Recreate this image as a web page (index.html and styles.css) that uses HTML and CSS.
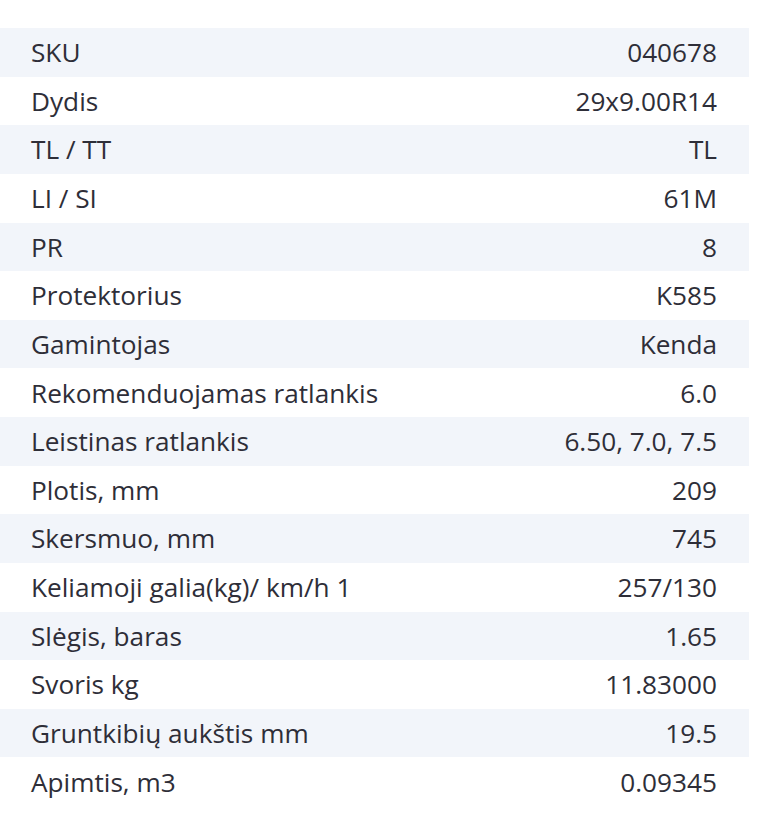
FILE: index.html
```html
<!DOCTYPE html>
<html lang="lt">
<head>
<meta charset="utf-8">
<link rel="stylesheet" href="styles.css">
</head>
<body>
<div class="specs">
  <div class="row"><span class="k">SKU</span><span class="v">040678</span></div>
  <div class="row"><span class="k">Dydis</span><span class="v">29x9.00R14</span></div>
  <div class="row"><span class="k">TL / TT</span><span class="v">TL</span></div>
  <div class="row"><span class="k">LI / SI</span><span class="v">61M</span></div>
  <div class="row"><span class="k">PR</span><span class="v">8</span></div>
  <div class="row"><span class="k">Protektorius</span><span class="v">K585</span></div>
  <div class="row"><span class="k">Gamintojas</span><span class="v">Kenda</span></div>
  <div class="row"><span class="k">Rekomenduojamas ratlankis</span><span class="v">6.0</span></div>
  <div class="row"><span class="k">Leistinas ratlankis</span><span class="v">6.50, 7.0, 7.5</span></div>
  <div class="row"><span class="k">Plotis, mm</span><span class="v">209</span></div>
  <div class="row"><span class="k">Skersmuo, mm</span><span class="v">745</span></div>
  <div class="row"><span class="k">Keliamoji galia(kg)/ km/h 1</span><span class="v">257/130</span></div>
  <div class="row"><span class="k">Slėgis, baras</span><span class="v">1.65</span></div>
  <div class="row"><span class="k">Svoris kg</span><span class="v">11.83000</span></div>
  <div class="row"><span class="k">Gruntkibių aukštis mm</span><span class="v">19.5</span></div>
  <div class="row"><span class="k">Apimtis, m3</span><span class="v">0.09345</span></div>
</div>
</body>
</html>
```
FILE: styles.css
```css
html, body {
  margin: 0;
  padding: 0;
  background: #ffffff;
}
body {
  font-family: "Open Sans", "Noto Sans", sans-serif;
  color: #2e2e38;
  font-size: 26.2px;
}
.specs {
  margin-top: 28px;
  width: 749px;
  display: flex;
  flex-direction: column;
}
.row {
  height: 48.625px;
  display: flex;
  align-items: center;
  justify-content: space-between;
  padding: 0 32px 0 31px;
  box-sizing: border-box;
  line-height: 1;
}
.row:nth-child(odd) {
  background: #f2f5fa;
}
.k, .v {
  white-space: nowrap;
}
```
